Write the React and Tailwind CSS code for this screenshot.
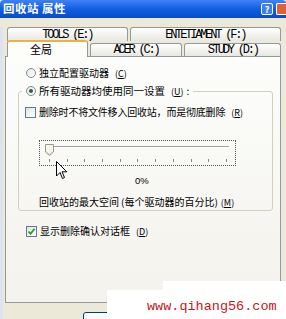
import React from 'react';

const cjk = { fontFamily: '"Noto Sans CJK SC", "Noto Sans", sans-serif' };
const mono = { fontFamily: '"Liberation Mono", "DejaVu Sans Mono", monospace' };

const tabCls =
  'flex items-center justify-center border border-[#919b9c] border-b-0 rounded-t-[3px] bg-gradient-to-b from-white to-[#e8e7e1] text-[12px] text-black tracking-[-2.2px] leading-none';

const Mn = ({ k }) => (
  <span className="ml-[3px] text-[9px]">
    (<span className="underline">{k}</span>)
  </span>
);

const Radio = ({ on }) => (
  <span className="w-[10px] h-[10px] rounded-full border border-[#7d8c9c] bg-gradient-to-br from-[#e6e6e0] to-white flex items-center justify-center shrink-0">
    {on && <span className="w-[4px] h-[4px] rounded-full bg-[#3a5a3a]" />}
  </span>
);

const Check = ({ on }) => (
  <span className="w-[11px] h-[11px] border border-[#5f7a96] bg-gradient-to-br from-[#e4e4dc] to-white flex items-center justify-center shrink-0">
    {on && (
      <svg width="9" height="9" viewBox="0 0 9 9">
        <path d="M1.5 4.5 L3.5 6.8 L7.6 1.8" fill="none" stroke="#2c9a2c" strokeWidth="1.8" />
      </svg>
    )}
  </span>
);

export default function App() {
  const ticks = Array.from({ length: 11 }, (_, i) => i);
  return (
    <div className="relative w-[286px] h-[319px] overflow-hidden bg-[#ece9d8]" style={cjk}>
      {/* title bar */}
      <div className="h-[18px] flex items-center justify-between pl-[3px] rounded-t-[4px] bg-gradient-to-b from-[#3e82f4] via-[#0f5ee2] to-[#0a4bc9]">
        <span className="text-white text-[11.5px] font-bold tracking-[0.5px] leading-none">回收站 属性</span>
        <div className="flex gap-[3px] items-center">
          <span className="w-[12px] h-[12px] rounded-[2px] border border-white bg-[#3f7fe8] text-white text-[9px] font-bold leading-none flex items-center justify-center">?</span>
          <span className="w-[10px] h-[12px] rounded-l-[2px] border border-r-0 border-white bg-[#e0603a]" />
        </div>
      </div>

      {/* body */}
      <div className="border-l-[3px] border-[#dbe4ef] pl-[2px] pr-[5px]">
        {/* tab row 1 */}
        <div className="flex gap-[2px] ml-[2px] mt-[9px] h-[14px]" style={mono}>
          <div className={`${tabCls} w-[121px]`}>TOOLS (E:)</div>
          <div className={`${tabCls} w-[152px]`}>ENTETIAMENT (F:)</div>
        </div>
        {/* tab row 2 */}
        <div className="flex items-end gap-[2px] ml-[2px] h-[15px]">
          <div className="relative z-10 -mb-px w-[81px] h-[17px] border border-b-0 border-[#919b9c] border-t-2 border-t-[#f0b040] rounded-t-[3px] bg-[#fdfdfc] flex items-center pl-[22px] text-[11px] text-black leading-none">
            全局
          </div>
          <div className={`${tabCls} w-[93px] h-[13px]`} style={mono}>ACER (C:)</div>
          <div className={`${tabCls} w-[97px] h-[13px]`} style={mono}>STUDY (D:)</div>
        </div>

        {/* panel */}
        <div className="h-[247px] border border-[#919b9c] bg-gradient-to-b from-[#fdfdfc] to-[#f3f2ec] text-[10px] text-black leading-none">
          {/* radio 1 */}
          <div className="flex items-center gap-[3px] ml-[20px] mt-[10px] h-[12px]">
            <Radio />
            <span>独立配置驱动器</span>
            <Mn k="C" />
          </div>

          {/* group box */}
          <fieldset className="ml-[12px] mt-[5px] w-[255px] h-[127px] border border-[#d0d0bf] rounded-[3px]">
            <legend className="ml-[3px] px-[4px]">
              <span className="flex items-center gap-[3px] h-[14px]">
                <Radio on />
                <span className="text-[10.5px]">所有驱动器均使用同一设置</span>
                <Mn k="U" />
                <span>:</span>
              </span>
            </legend>

            {/* checkbox */}
            <div className="flex items-center gap-[3px] ml-[6px] mt-[8px] h-[12px]">
              <Check />
              <span className="tracking-[-0.2px]">删除时不将文件移入回收站，而是彻底删除</span>
              <Mn k="R" />
            </div>

            {/* slider */}
            <div className="relative ml-[20px] mt-[22px] w-[197px] h-[26px] border border-dotted border-[#555]">
              <div className="absolute left-[13px] top-[5px] w-[176px] h-[2px] border-t border-[#a0a0a0] border-b border-b-white bg-[#d8d8d0]" />
              <svg className="absolute left-[5px] top-[3px]" width="9" height="12" viewBox="0 0 9 12">
                <path d="M0.5 0.5 H8.5 V8 L4.5 11.5 L0.5 8 Z" fill="#f7f6ee" stroke="#9a9a88" />
                <path d="M1.5 8 L4.5 10.5 L7.5 8" fill="none" stroke="#c9c4a8" />
              </svg>
              <div className="absolute left-[9px] right-[8px] top-[18px] flex justify-between">
                {ticks.map((t) => (
                  <span key={t} className="w-px h-[3px] bg-[#888]" />
                ))}
              </div>
            </div>

            <div className="ml-[116px] mt-[10px] h-[12px] text-[9.5px]" style={{ fontFamily: '"Liberation Sans", Arial, sans-serif' }}>0%</div>

            <div className="flex items-center ml-[20px] mt-[8px] h-[12px]">
              <span>回收站的最大空间</span>
              <span className="ml-[2px]">(每个驱动器的百分比)</span>
              <Mn k="M" />
            </div>
          </fieldset>

          {/* confirm checkbox */}
          <div className="flex items-center gap-[3px] ml-[20px] mt-[14px] h-[12px]">
            <Check on />
            <span>显示删除确认对话框</span>
            <Mn k="D" />
          </div>
        </div>

        {/* bottom button */}
        <div className="ml-[78px] mt-[9px] w-[75px] h-[23px] border border-[#003c74] rounded-[3px] bg-gradient-to-b from-white to-[#e3e3db]" />
      </div>

      {/* mouse cursor */}
      <svg className="absolute left-[56px] top-[161px]" width="12" height="19" viewBox="0 0 12 19">
        <path d="M0.5 0.5 L0.5 15 L4 11.5 L6.5 17.5 L8.5 16.5 L6 10.8 L10.8 10.8 Z" fill="#fff" stroke="#000" strokeLinejoin="round" />
      </svg>

      {/* watermark */}
      <div className="absolute left-[163px] top-[281px] right-0 h-[10px] bg-white" />
      <div className="absolute left-[107px] top-[290px] right-0 bottom-0 bg-white" />
      <div className="absolute left-[147px] top-[300px] text-[13.5px] text-[#c8161d] leading-none" style={mono}>
        www.qihang56.com
      </div>
    </div>
  );
}
